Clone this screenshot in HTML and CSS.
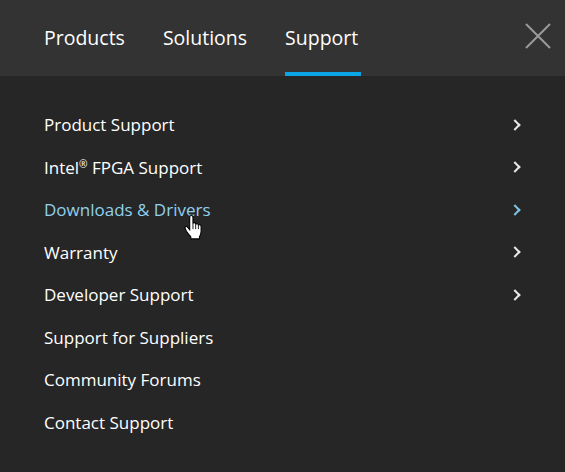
FILE: index.html
```html
<!DOCTYPE html>
<html lang="en">
<head>
    <meta charset="UTF-8">
    <meta name="viewport" content="width=device-width, initial-scale=1.0">
    <title>Intel Support Menu</title>
    <link rel="stylesheet" href="styles.css">
</head>
<body>
    <div class="header">
        <div class="tabs">
            <a href="#" class="tab">Products</a>
            <a href="#" class="tab">Solutions</a>
            <a href="#" class="tab active">Support</a>
        </div>
        <button class="close" title="Close">
            <svg width="26" height="26" viewBox="0 0 26 26"><path d="M1 1 L25 25 M25 1 L1 25" stroke="#9a9a9a" stroke-width="2" fill="none"/></svg>
        </button>
    </div>
    <ul class="menu">
        <li><a href="#">Product Support</a><span class="chev"></span></li>
        <li><a href="#">Intel<sup>®</sup> FPGA Support</a><span class="chev"></span></li>
        <li class="hover"><a href="#">Downloads &amp; Drivers</a><span class="chev"></span>
            <svg class="cursor" width="19" height="25" viewBox="0 0 17 23"><path d="M5 2 Q5 0.5 6.5 0.5 Q8 0.5 8 2 V8 Q8 7 9.3 7 Q10.5 7 10.5 8.5 V9 Q10.5 8 11.8 8 Q13 8 13 9.5 V10 Q13 9 14.2 9 Q15.5 9 15.5 10.5 V15 Q15.5 18 14 20 V22 H6 V20 Q4 18 2 15 L0.8 12.5 Q0.3 11.3 1.3 10.8 Q2.3 10.3 3.2 11.3 L5 13.5 Z" fill="#fff" stroke="#000" stroke-width="1"/><path d="M8 8 V13 M10.5 9 V13 M13 10 V13" stroke="#000" stroke-width="0.8"/></svg>
        </li>
        <li><a href="#">Warranty</a><span class="chev"></span></li>
        <li><a href="#">Developer Support</a><span class="chev"></span></li>
        <li><a href="#">Support for Suppliers</a></li>
        <li><a href="#">Community Forums</a></li>
        <li><a href="#">Contact Support</a></li>
    </ul>
</body>
</html>
```

FILE: styles.css
```css
* { box-sizing: border-box; margin: 0; padding: 0; }
body { font-family: 'Open Sans', 'Noto Sans', Arial, sans-serif; background: #262626; color: #fff; min-height: 100vh; }
a { color: #fff; text-decoration: none; }
.header { background: #333333; height: 76px; display: flex; align-items: stretch; justify-content: space-between; padding: 0 14px 0 44px; }
.tabs { display: flex; gap: 38px; }
.tab { font-size: 19.5px; display: flex; align-items: center; border-bottom: 4px solid transparent; padding-top: 3px; }
.tab.active { border-bottom-color: #0ba5e6; padding-right: 3px; }
.close { background: none; border: none; cursor: pointer; display: flex; align-items: center; margin-bottom: 4px; }
.menu { list-style: none; padding: 27.5px 43px 0 44px; }
.menu li { height: 42.5px; display: flex; align-items: center; justify-content: space-between; position: relative; font-size: 17px; }
.menu sup { font-size: 0.6em; vertical-align: 0.55em; line-height: 0; }
.chev { width: 8px; height: 8px; border-top: 2px solid #e8e8e8; border-right: 2px solid #e8e8e8; transform: rotate(45deg); margin-right: 3px; }
.menu li.hover a { color: #8fd1ef; }
.menu li.hover .chev { border-color: #7cc4e4; }
.cursor { position: absolute; left: 140px; top: 26px; }
```
